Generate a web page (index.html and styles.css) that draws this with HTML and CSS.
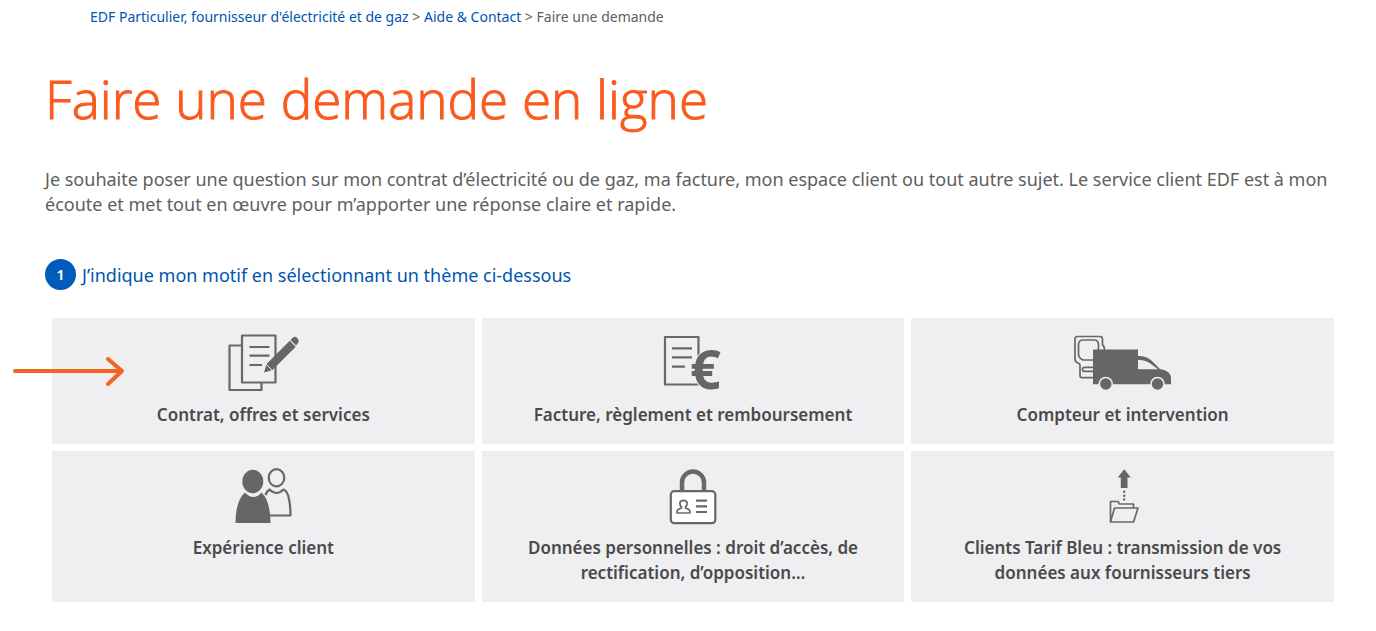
FILE: index.html
```html
<!DOCTYPE html>
<html lang="fr">
<head>
<meta charset="utf-8">
<meta name="viewport" content="width=device-width, initial-scale=1">
<title>Faire une demande en ligne</title>
<link rel="stylesheet" href="styles.css">
</head>
<body>
<nav class="breadcrumb" aria-label="Fil d'Ariane">
  <a href="#">EDF Particulier, fournisseur d'électricité et de gaz</a> &gt; <a href="#">Aide &amp; Contact</a> &gt; <span>Faire une demande</span>
</nav>
<main class="page">
  <h1 class="title">Faire une demande en ligne</h1>
  <p class="intro">Je souhaite poser une question sur mon contrat d’électricité ou de gaz, ma facture, mon espace client ou tout autre sujet. Le service client EDF est à mon écoute et met tout en œuvre pour m’apporter une réponse claire et rapide.</p>
  <h2 class="step"><span class="step-number">1</span><span class="step-text">J’indique mon motif en sélectionnant un thème ci-dessous</span></h2>
  <div class="themes">
    <button class="theme" type="button">
      <svg class="pointer" viewBox="0 0 114 32" aria-hidden="true"><path d="M4 16H110M97 4L111 16L97 29"/></svg>
      <svg class="icon" viewBox="0 0 100 60" aria-hidden="true">
        <path class="line" d="M28 12.5H16.5V57H48.5V50M29 2.5H62.5V49.5H29Z"/>
        <path class="line" d="M36.5 14H56.5M36.5 22.7H56.5M36.5 32H49"/>
        <path class="solid" d="M51 39.500L53.500 31L77 7.500L83 13.500L59.500 37Z"/>
        <path class="solid" d="M77.500 7L80 4.600Q82 3 84 4.800L85 6Q86.500 8 85 10L83 12.500Z"/>
        <path class="gap" d="M53 31L59.500 37.500M76 6.500L84 14.500"/>
      </svg>
      <span class="label">Contrat, offres et services</span>
    </button>
    <button class="theme" type="button">
      <svg class="icon" viewBox="0 0 100 60" aria-hidden="true">
        <path class="line" d="M22 4H55.500V51.500H22Z"/>
        <path class="line" d="M29 15.300H49M29 24.300H49M29 33.700H42"/>
        <text class="euro" x="47" y="56">€</text>
      </svg>
      <span class="label">Facture, règlement et remboursement</span>
    </button>
    <button class="theme" type="button">
      <svg class="icon" viewBox="0 0 100 60" aria-hidden="true">
        <path class="thin" d="M20 44.700H9Q7 44.700 7 42.500V32Q7 30.500 5 30Q2 29 2 26V6Q2 3.500 4.500 3.500H27Q29.500 3.500 29.500 6V12Q31.500 13 31.500 17"/>
        <path class="thin" d="M20 27H10Q5.500 25 5.500 21V12Q5.500 7 10 7H21Q25.500 7 25.500 12V17M20 34.300H11.500Q9.500 34.300 9.500 36.300T11.500 38.300H20"/>
        <path class="solid" fill-rule="evenodd" d="M20 16.500H65V23Q74 22 81 30L87 36Q98 38 98 45V51.300H20ZM65 27V36.300H85L78 31Q72 26.500 65 27Z"/>
        <circle class="solid halo" cx="32.800" cy="51" r="6.500"/>
        <circle class="solid halo" cx="84.500" cy="51" r="6.500"/>
      </svg>
      <span class="label">Compteur et intervention</span>
    </button>
    <button class="theme" type="button">
      <svg class="icon" viewBox="0 0 100 60" aria-hidden="true">
        <ellipse class="line" cx="63.500" cy="11.800" rx="7.800" ry="8.600"/>
        <path class="line" d="M52.500 29Q54 25 56.500 23.500Q60 27 63.500 27T70.500 23.500Q74.500 25 76 33Q77.500 40 77.500 49.500H56"/>
        <ellipse class="solid" cx="39.800" cy="15.500" rx="10.500" ry="11.700"/>
        <path class="solid" d="M22.500 57Q22.500 35 32 26.500Q36 31 40.500 31T48.500 26.500Q57.500 35 57.500 57Z"/>
      </svg>
      <span class="label">Expérience client</span>
    </button>
    <button class="theme" type="button">
      <svg class="icon" viewBox="0 0 100 60" aria-hidden="true">
        <path class="shackle" d="M39 25V16.500A11 11 0 0 1 61 16.500V25"/>
        <rect class="line card" x="27.800" y="25.200" width="44.500" height="32" rx="3.500"/>
        <path class="thin" d="M34 47H47Q47.500 43 42.500 42.200V41Q44.500 39.500 44 36.500Q43.500 34.300 40.500 34.300T37 36.500Q36.500 39.500 38.500 41V42.200Q33.500 43 34 47Z"/>
        <path class="line" d="M53 34.700H64M53 40.300H64M53 46H64"/>
      </svg>
      <span class="label">Données personnelles : droit d’accès, de rectification, d’opposition…</span>
    </button>
    <button class="theme" type="button">
      <svg class="icon" viewBox="0 0 100 60" aria-hidden="true">
        <path class="solid" d="M51.200 3.300L57.800 11.500H54.500V22H47.800V11.500H44.800Z"/>
        <circle class="solid" cx="51.200" cy="25.700" r="1.200"/>
        <circle class="solid" cx="51.200" cy="29.700" r="1.200"/>
        <circle class="solid" cx="51.200" cy="33.500" r="1.200"/>
        <path class="thin" d="M37.500 56V35.500H45L46.500 38H60.500V42M37.500 56L41.500 42H65L60.500 56Z"/>
      </svg>
      <span class="label">Clients Tarif Bleu : transmission de vos données aux fournisseurs tiers</span>
    </button>
  </div>
</main>
</body>
</html>
```

FILE: styles.css
```css
* {
  box-sizing: border-box;
}

body {
  margin: 0;
  background: #fff;
  color: #5e5e5e;
  font-family: "Noto Sans", "Open Sans", sans-serif;
}

.breadcrumb {
  padding: 7px 90px 0;
  font-size: 14px;
  line-height: 20px;
}

.breadcrumb a {
  color: #0055b0;
  text-decoration: none;
}

.page {
  padding: 0 42px 29px 45px;
}

.title {
  margin: 37px 0 0;
  color: #fa5a1e;
  font-family: "Open Sans", sans-serif;
  font-size: 53px;
  font-weight: 300;
  line-height: 70px;
  -webkit-text-stroke: 1px currentColor;
}

.intro {
  margin: 33px 0 0;
  font-size: 18px;
  line-height: 25px;
}

.step {
  display: flex;
  align-items: center;
  gap: 6px;
  margin: 40px 0 0;
  color: #0055b0;
  font-size: 18px;
  font-weight: 400;
  line-height: 31px;
}

.step-number {
  width: 31px;
  border-radius: 50%;
  background: #005bbb;
  color: #fff;
  font-size: 15px;
  font-weight: 600;
  text-align: center;
}

.step-text {
  padding-top: 3px;
}

.themes {
  display: grid;
  grid-template-columns: repeat(3, 1fr);
  gap: 7px;
  margin: 27px 0 0 7px;
}

.theme {
  position: relative;
  display: flex;
  flex-direction: column;
  align-items: center;
  gap: 9px;
  padding: 15px 32px 17px;
  border: 0;
  background: #efeff1;
  color: #4a4a4a;
  font-family: inherit;
  font-size: 17px;
  font-weight: 600;
  line-height: 25px;
  cursor: pointer;
}

.pointer {
  position: absolute;
  top: 37px;
  left: -41px;
  width: 114px;
  height: 32px;
  fill: none;
  stroke: #f26422;
  stroke-width: 4;
  stroke-linecap: round;
  stroke-linejoin: round;
}

.icon {
  width: 100px;
  height: 60px;
  overflow: visible;
}

.line,
.thin,
.shackle {
  fill: none;
  stroke: #686868;
  stroke-width: 2.2;
  stroke-linejoin: round;
}

.thin {
  stroke-width: 1.7;
}

.shackle {
  stroke-width: 4.5;
}

.card {
  fill: #fff;
}

.solid {
  fill: #666;
}

.halo {
  stroke: #efeff1;
  stroke-width: 1.5;
}

.gap {
  stroke: #efeff1;
  stroke-width: 1;
}

.euro {
  fill: #666;
  font-family: "Open Sans", sans-serif;
  font-size: 54px;
  font-weight: 700;
  stroke: #efeff1;
  stroke-width: 2;
  paint-order: stroke;
}
```
